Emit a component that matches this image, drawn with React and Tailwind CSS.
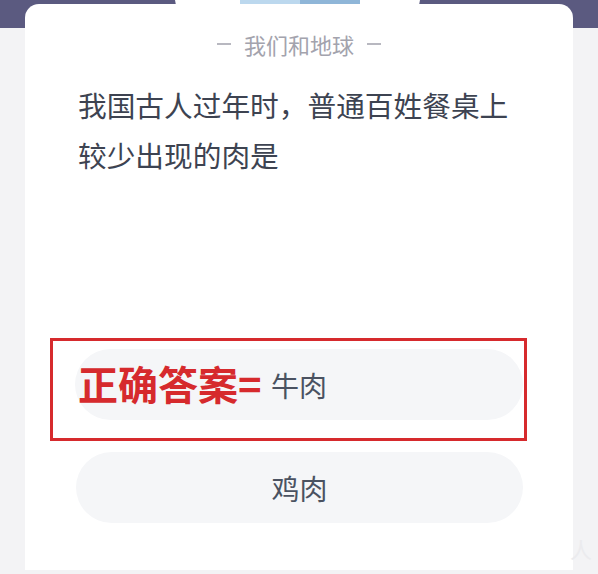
export default function App() {
  return (
    <div className="relative h-[574px] w-[598px] overflow-hidden bg-[#f3f3f5]" style={{ fontFamily: '"Noto Sans CJK SC", "Noto Sans", sans-serif' }}>
      {/* top header band */}
      <div className="absolute left-0 top-0 h-[28px] w-full bg-[#5b5a80]" />
      <div className="absolute left-[175px] top-0 h-[10px] w-[245px] rounded-b-[14px] bg-white" />
      <div className="absolute left-[240px] top-0 h-[4px] w-[60px] bg-[#bcd8ee]" />
      <div className="absolute left-[300px] top-0 h-[4px] w-[60px] bg-[#8fb6d8]" />

      <div className="relative mx-[25px] mt-[4px] flex h-[566px] flex-col rounded-t-[14px] bg-white">
        <div className="mt-[29px] flex items-center justify-center gap-[13px] text-[22px] leading-[22px] text-[#a3a3ad]">
          <span className="h-[1.5px] w-[14px] bg-[#b8b8c0]" />
          <span>我们和地球</span>
          <span className="h-[1.5px] w-[14px] bg-[#b8b8c0]" />
        </div>

        <p className="mt-[25px] pl-[53px] text-[28.7px] leading-[50px] text-[#3d4351]">
          我国古人过年时，普通百姓餐桌上<br />较少出现的肉是
        </p>

        <div className="mt-[158px] ml-[25px] h-[103px] w-[477px] border-[3.5px] border-[#d62a2d] pl-[22px] pr-[1px] pt-[8px]">
          <div className="relative flex h-[71px] items-center justify-center rounded-full bg-[#f5f6f8] text-[28px] text-[#4a5261]">
            <span className="absolute left-[3px] top-[13px] text-[40px] font-bold leading-[42px] text-[#d62a2d]">正确答案=</span>
            牛肉
          </div>
        </div>

        <div className="ml-[51px] mt-[11px] flex h-[71px] w-[447px] items-center justify-center rounded-full bg-[#f5f6f8] text-[28px] text-[#4a5261]">
          鸡肉
        </div>
      </div>

      <span className="absolute right-[6px] top-[532px] text-[22px] text-[#ebebee]">人</span>
    </div>
  )
}
